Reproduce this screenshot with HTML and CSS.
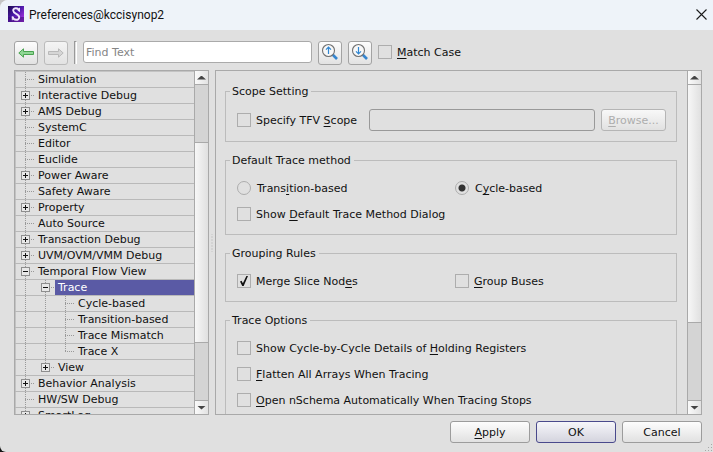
FILE: index.html
```html
<!DOCTYPE html>
<html lang="en">
<head>
<meta charset="utf-8">
<title>Preferences@kccisynop2</title>
<link rel="stylesheet" href="styles.css">
</head>
<body>
<div class="window">
  <header class="titlebar">
    <svg class="logo" width="16" height="16" viewBox="0 0 16 16" aria-hidden="true">
      <defs>
        <linearGradient id="lg" x1="0" y1="0" x2="1" y2="1">
          <stop offset="0" stop-color="#1c0a4c"/><stop offset=".45" stop-color="#4a18a8"/><stop offset="1" stop-color="#c03af0"/>
        </linearGradient>
      </defs>
      <rect width="16" height="16" fill="url(#lg)"/>
      <path d="M0 11h16v5H0z" fill="#3c0c78" opacity=".6"/>
      <path d="M11 5.200C10.600 1.400 5.200 1.400 5.200 4.600C5.200 8 11.200 7.600 11.200 11.200C11.200 14.600 5.400 14.800 4.600 10.800" fill="none" stroke="#f1e6fb" stroke-width="1.900"/>
      <path d="M11.500 1.800v4M4.300 10.200V14.200" stroke="#f1e6fb" stroke-width="1"/>
    </svg>
    <h1>Preferences@kccisynop2</h1>
    <button class="close" aria-label="Close">
      <svg width="11" height="11" viewBox="0 0 11 11"><path d="M.5.5l10 10M10.500.5l-10 10" stroke="#1b1b1b" stroke-width="1.100" fill="none"/></svg>
    </button>
  </header>

  <div class="toolbar">
    <button class="tool" aria-label="Back">
      <svg width="16" height="10" viewBox="0 0 16 10"><path d="M.8 5L5.500.8V3.500H15.500V6.500H5.500V9.200Z" fill="#8fd694" stroke="#4aa350"/></svg>
    </button>
    <button class="tool" aria-label="Forward" disabled>
      <svg width="16" height="10" viewBox="0 0 16 10"><path d="M15.200 5L10.500.8V3.500H.5V6.500H10.500V9.200Z" fill="#d6d6d6" stroke="#b9b9b9"/></svg>
    </button>
    <span class="separator"></span>
    <input class="field find" type="text" placeholder="Find Text" aria-label="Find Text">
    <button class="tool search" aria-label="Find previous">
      <svg width="18" height="18" viewBox="0 0 18 18" fill="none"><path d="M11.500 11.500L16 16" stroke="#3585cf" stroke-width="2.600"/><circle cx="7.500" cy="7.500" r="6" fill="#f8f8f8" stroke="#717171" stroke-width="1.100"/><path d="M7.500 11V4.500M5 6.700L7.500 4.200L10 6.700" stroke="#2f86d2" stroke-width="1.200"/></svg>
    </button>
    <button class="tool search" aria-label="Find next">
      <svg width="18" height="18" viewBox="0 0 18 18" fill="none"><path d="M11.500 11.500L16 16" stroke="#3585cf" stroke-width="2.600"/><circle cx="7.500" cy="7.500" r="6" fill="#f8f8f8" stroke="#717171" stroke-width="1.100"/><path d="M7.500 4V10.500M5 8.300L7.500 10.800L10 8.300" stroke="#2f86d2" stroke-width="1.200"/></svg>
    </button>
    <label class="option"><input type="checkbox"><span><u>M</u>atch Case</span></label>
  </div>

  <main class="panes">
    <nav class="pane tree-pane" aria-label="Categories">
      <ul class="tree">
        <li><i class="rail leaf"></i><span>Simulation</span></li>
        <li><i class="rail leaf"><button class="toggle plus" aria-label="Expand"></button></i><span>Interactive Debug</span></li>
        <li><i class="rail leaf"><button class="toggle plus" aria-label="Expand"></button></i><span>AMS Debug</span></li>
        <li><i class="rail leaf"></i><span>SystemC</span></li>
        <li><i class="rail leaf"></i><span>Editor</span></li>
        <li><i class="rail leaf"></i><span>Euclide</span></li>
        <li><i class="rail leaf"><button class="toggle plus" aria-label="Expand"></button></i><span>Power Aware</span></li>
        <li><i class="rail leaf"></i><span>Safety Aware</span></li>
        <li><i class="rail leaf"><button class="toggle plus" aria-label="Expand"></button></i><span>Property</span></li>
        <li><i class="rail leaf"></i><span>Auto Source</span></li>
        <li><i class="rail leaf"><button class="toggle plus" aria-label="Expand"></button></i><span>Transaction Debug</span></li>
        <li><i class="rail leaf"><button class="toggle plus" aria-label="Expand"></button></i><span>UVM/OVM/VMM Debug</span></li>
        <li><i class="rail leaf"><button class="toggle" aria-label="Collapse"></button></i><span>Temporal Flow View</span></li>
        <li><i class="rail"></i><i class="rail leaf"><button class="toggle" aria-label="Collapse"></button></i><span class="selected">Trace</span></li>
        <li><i class="rail"></i><i class="rail"></i><i class="rail leaf"></i><span>Cycle-based</span></li>
        <li><i class="rail"></i><i class="rail"></i><i class="rail leaf"></i><span>Transition-based</span></li>
        <li><i class="rail"></i><i class="rail"></i><i class="rail leaf"></i><span>Trace Mismatch</span></li>
        <li><i class="rail"></i><i class="rail"></i><i class="rail leaf last"></i><span>Trace X</span></li>
        <li><i class="rail"></i><i class="rail leaf last"><button class="toggle plus" aria-label="Expand"></button></i><span>View</span></li>
        <li><i class="rail leaf"><button class="toggle plus" aria-label="Expand"></button></i><span>Behavior Analysis</span></li>
        <li><i class="rail leaf"></i><span>HW/SW Debug</span></li>
        <li><i class="rail leaf"><button class="toggle plus" aria-label="Expand"></button></i><span>SmartLog</span></li>
      </ul>
      <div class="scrollbar tree-scroll">
        <button class="arrow up" aria-label="Scroll up"></button>
        <div class="groove before"></div>
        <div class="thumb"></div>
        <div class="groove after"></div>
        <button class="arrow down" aria-label="Scroll down"></button>
      </div>
    </nav>

    <div class="splitter"></div>

    <section class="pane" aria-label="Trace settings">
      <div class="settings">
        <fieldset class="scope">
          <legend>Scope Setting</legend>
          <label class="option"><input type="checkbox"><span>Specify TFV <u>S</u>cope</span></label>
          <input class="field" type="text" aria-label="TFV scope" disabled>
          <button class="push browse" disabled><u>B</u>rowse...</button>
        </fieldset>
        <fieldset>
          <legend>Default Trace method</legend>
          <div class="options">
            <label class="option"><input type="radio" name="method"><span>Trans<u>i</u>tion-based</span></label>
            <label class="option"><input type="radio" name="method" checked><span>C<u>y</u>cle-based</span></label>
            <label class="option wide"><input type="checkbox"><span>Show <u>D</u>efault Trace Method Dialog</span></label>
          </div>
        </fieldset>
        <fieldset>
          <legend>Grouping Rules</legend>
          <div class="options">
            <label class="option"><input type="checkbox" checked><span>Merge Slice Nod<u>e</u>s</span></label>
            <label class="option"><input type="checkbox"><span><u>G</u>roup Buses</span></label>
          </div>
        </fieldset>
        <fieldset>
          <legend>Trace Options</legend>
          <div class="options">
            <label class="option wide"><input type="checkbox"><span>Show Cycle-by-Cycle Details of <u>H</u>olding Registers</span></label>
            <label class="option wide"><input type="checkbox"><span><u>F</u>latten All Arrays When Tracing</span></label>
            <label class="option wide"><input type="checkbox"><span><u>O</u>pen nSchema Automatically When Tracing Stops</span></label>
          </div>
        </fieldset>
      </div>
      <div class="scrollbar settings-scroll">
        <button class="arrow up" aria-label="Scroll up"></button>
        <div class="thumb"></div>
        <div class="groove after"></div>
        <button class="arrow down" aria-label="Scroll down"></button>
      </div>
    </section>
  </main>

  <footer class="actions">
    <button class="push"><u>A</u>pply</button>
    <button class="push default">OK</button>
    <button class="push">Cancel</button>
  </footer>
  <svg class="grip" width="9" height="9" viewBox="0 0 9 9" aria-hidden="true"><path d="M7 1h1v1H7zM7 4h1v1H7zM4 4h1v1H4zM7 7h1v1H7zM4 7h1v1H4zM1 7h1v1H1z" fill="#a8a8a8"/></svg>
</div>
</body>
</html>
```
FILE: styles.css
```css
* { box-sizing: border-box; }

html { background: linear-gradient(90deg, #151515 50%, #e0e0e0 50%) bottom / 100% 50% no-repeat #c4c4c4; }

body {
  margin: 0;
  font: 11px/14px "DejaVu Sans", sans-serif;
  color: #111;
}

button, input { font: inherit; color: inherit; margin: 0; padding: 0; }
u { text-underline-offset: 2px; text-decoration-thickness: 1px; text-decoration-skip-ink: none; }

.window {
  position: relative;
  display: flex;
  flex-direction: column;
  height: 100vh;
  background: #e0e0e0;
  border-radius: 8px 0 0 6px;
  overflow: hidden;
}

/* Title bar */
.titlebar {
  flex: none;
  display: flex;
  align-items: center;
  gap: 5px;
  height: 30px;
  padding: 0 6px 2px 8px;
  background: #eef3f9;
}
.titlebar h1 {
  flex: 1;
  margin: 0;
  padding-top: 2px;
  font: 12px/16px Roboto, "Open Sans", sans-serif;
}
.close { display: flex; border: 0; background: none; }

/* Toolbar */
.toolbar {
  flex: none;
  display: flex;
  align-items: flex-start;
  gap: 6px;
  padding: 11px 11px 5px 14px;
}
.tool {
  display: flex;
  align-items: center;
  justify-content: center;
  width: 24px;
  height: 24px;
  border: 1px solid #a3a3a3;
  border-radius: 3px;
  background: linear-gradient(#fdfdfd, #e2e2e2);
}
.search { padding-bottom: 2px; }
.tool:disabled { border-color: #bbb; background: linear-gradient(#f4f4f4, #e2e2e2); }
.separator {
  width: 3px;
  height: 23px;
  border: solid #999;
  border-width: 1px 0 0 1px;
  border-right: 1px solid #fff;
}
.field {
  height: 22px;
  border: 1px solid #aaa;
  border-radius: 3px;
  padding: 0 2px;
  background: #fff;
}
.field::placeholder { color: #858585; opacity: 1; }
.field:disabled { border-color: #999; background: #e0e0e0; }
.find { width: 229px; }
.toolbar .option { margin-top: 4px; }

/* Check boxes and radio buttons */
.option { display: flex; align-items: center; gap: 5px; height: 14px; white-space: nowrap; }
.option span { padding-top: 2px; }
.option input {
  appearance: none;
  flex: none;
  width: 14px;
  height: 14px;
  border: 1px solid #adadad;
  background: center no-repeat;
}
.option input[type="radio"] { border-radius: 50%; margin-right: 1px; }
.option input[type="radio"]:checked {
  background: radial-gradient(circle, #333 3px, transparent 4px);
}
.option input[type="checkbox"]:checked {
  display: grid;
  place-items: center;
}
.option input[type="checkbox"]:checked::before {
  content: "";
  width: 8px;
  height: 10px;
  background: #111;
  clip-path: polygon(0 55%, 20% 48%, 36% 72%, 80% 0, 100% 0, 46% 100%, 28% 100%);
}

/* Panes */
.panes { flex: 1; display: flex; min-height: 0; padding: 0 11px 0 14px; }
.pane {
  flex: 1;
  display: flex;
  min-width: 0;
  border: 1px solid #a9a9a9;
  overflow: hidden;
}
.tree-pane { flex: none; width: 195px; box-shadow: inset 1px 1px #c3c3c3; }
.splitter {
  flex: none;
  width: 6px;
  height: 18px;
  align-self: center;
  background: radial-gradient(circle, #aaa 1px, transparent 1px) center / 3px 3px;
  background-clip: content-box;
  padding: 0 2px 0 1px;
}

/* Category tree */
.tree { flex: 1; min-width: 0; margin: 1px 0 0; padding: 0; list-style: none; }
.tree li {
  display: flex;
  height: 16px;
  border-bottom: 1px solid #b9b9b9;
}
.tree span { flex: 1; padding-left: 3px; line-height: 15px; white-space: nowrap; }
.tree .selected { background: #5a5aa5; color: #fff; }
.rail {
  flex: none;
  display: flex;
  align-items: center;
  width: 20px;
  height: 15px;
  background: repeating-linear-gradient(#999 0 1px, transparent 1px 2px) 10px 0 / 1px 100% no-repeat;
}
.rail.leaf {
  background:
    repeating-linear-gradient(#999 0 1px, transparent 1px 2px) 10px 0 / 1px 100% no-repeat,
    repeating-linear-gradient(90deg, #999 0 1px, transparent 1px 2px) 10px 7px / 10px 1px no-repeat;
}
.rail.last { background-size: 1px 50%, 10px 1px; }
.toggle {
  width: 9px;
  height: 9px;
  margin-left: 6px;
  border: 1px solid #8e8e8e;
  background: linear-gradient(#111, #111) center / 5px 1px no-repeat #e8e8e8;
}
.toggle.plus {
  background:
    linear-gradient(#111, #111) center / 5px 1px no-repeat,
    linear-gradient(#111, #111) center / 1px 5px no-repeat #e8e8e8;
}

/* Scroll bars */
.scrollbar {
  flex: none;
  display: flex;
  flex-direction: column;
  width: 14px;
  border-left: 1px solid #a9a9a9;
}
.arrow {
  flex: none;
  display: grid;
  place-items: center;
  height: 14px;
  border: 0;
  background: linear-gradient(90deg, #fafafa, #e2e2e2);
}
.arrow::before {
  content: "";
  width: 9px;
  height: 4px;
  background: #444;
}
.up { border-bottom: 1px solid #a9a9a9; }
.up::before { clip-path: polygon(50% 0, 100% 100%, 0 100%); }
.down { border-top: 1px solid #a9a9a9; }
.down::before { clip-path: polygon(0 0, 100% 0, 50% 100%); }
.groove { background: #d4d4d4; }
.before { border-bottom: 1px solid #a9a9a9; }
.after { border-top: 1px solid #a9a9a9; }
.thumb { background: linear-gradient(90deg, #f7f7f7, #e0e0e0); }
.tree-scroll .before { flex: 57; }
.tree-scroll .thumb { flex: 201; }
.tree-scroll .after { flex: 57; }
.settings-scroll .thumb { flex: 238; }
.settings-scroll .after { flex: 77; }

/* Settings */
.settings {
  flex: 1;
  display: flex;
  flex-direction: column;
  gap: 11px;
  min-width: 0;
  padding: 13px 10px 0 9px;
}
fieldset {
  flex: none;
  min-width: 0;
  margin: 0;
  padding: 13px 10px 13px 11px;
  border: 1px solid #bcbcbc;
}
legend { height: 15px; margin-left: -7px; padding: 1px 3px 0 2px; }
.options { display: grid; grid-template-columns: 1fr 1fr; gap: 12px 7px; }
.wide { grid-column: 1 / -1; }
.scope { display: flex; align-items: center; gap: 6px; padding-top: 10px; padding-bottom: 10px; }
.scope .option { flex: none; width: 126px; }
.scope .field { flex: 1; min-width: 0; }

/* Push buttons */
.push {
  width: 80px;
  height: 22px;
  padding-top: 1px;
  border: 1px solid #9c9c9c;
  border-radius: 3px;
  background: linear-gradient(#fdfdfd, #e1e1e1);
}
.push:disabled { border-color: #b5b5b5; color: #adadad; background: linear-gradient(#f8f8f8, #e1e1e1); }
.browse { width: 65px; }
.default { border-color: #4a4a8c; background: linear-gradient(#f6f6fa, #d4d4de); }

.actions {
  flex: none;
  display: flex;
  justify-content: flex-end;
  gap: 6px;
  padding: 6px 11px 9px;
}
.grip { position: absolute; right: 0; bottom: 0; }
```
